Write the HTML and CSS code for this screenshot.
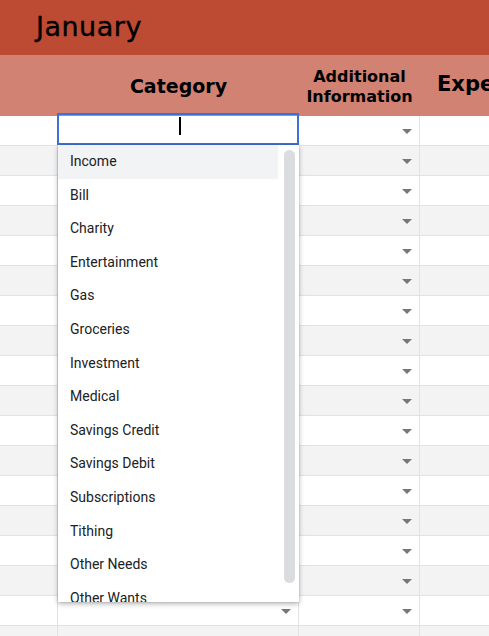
FILE: index.html
```html
<!DOCTYPE html>
<html>
<head>
<meta charset="utf-8">
<link rel="stylesheet" href="styles.css">
</head>
<body>
<div class="sheet">
  <div class="title"><span>January</span></div>
  <div class="header">
    <div class="hcell c1"></div>
    <div class="hcell c2"><span class="cat">Category</span></div>
    <div class="hcell c3"><span class="addl">Additional<br>Information</span></div>
    <div class="hcell c4"><span class="expe">Expe</span></div>
  </div>
  <div class="rows">
    <div class="row"><div class="cell c1"></div><div class="cell c2 selected"><span class="caret"></span></div><div class="cell c3"><i class="arrow"></i></div><div class="cell c4"></div></div>
    <div class="row alt"><div class="cell c1"></div><div class="cell c2"><i class="arrow"></i></div><div class="cell c3"><i class="arrow"></i></div><div class="cell c4"></div></div>
    <div class="row"><div class="cell c1"></div><div class="cell c2"><i class="arrow"></i></div><div class="cell c3"><i class="arrow"></i></div><div class="cell c4"></div></div>
    <div class="row alt"><div class="cell c1"></div><div class="cell c2"><i class="arrow"></i></div><div class="cell c3"><i class="arrow"></i></div><div class="cell c4"></div></div>
    <div class="row"><div class="cell c1"></div><div class="cell c2"><i class="arrow"></i></div><div class="cell c3"><i class="arrow"></i></div><div class="cell c4"></div></div>
    <div class="row alt"><div class="cell c1"></div><div class="cell c2"><i class="arrow"></i></div><div class="cell c3"><i class="arrow"></i></div><div class="cell c4"></div></div>
    <div class="row"><div class="cell c1"></div><div class="cell c2"><i class="arrow"></i></div><div class="cell c3"><i class="arrow"></i></div><div class="cell c4"></div></div>
    <div class="row alt"><div class="cell c1"></div><div class="cell c2"><i class="arrow"></i></div><div class="cell c3"><i class="arrow"></i></div><div class="cell c4"></div></div>
    <div class="row"><div class="cell c1"></div><div class="cell c2"><i class="arrow"></i></div><div class="cell c3"><i class="arrow"></i></div><div class="cell c4"></div></div>
    <div class="row alt"><div class="cell c1"></div><div class="cell c2"><i class="arrow"></i></div><div class="cell c3"><i class="arrow"></i></div><div class="cell c4"></div></div>
    <div class="row"><div class="cell c1"></div><div class="cell c2"><i class="arrow"></i></div><div class="cell c3"><i class="arrow"></i></div><div class="cell c4"></div></div>
    <div class="row alt"><div class="cell c1"></div><div class="cell c2"><i class="arrow"></i></div><div class="cell c3"><i class="arrow"></i></div><div class="cell c4"></div></div>
    <div class="row"><div class="cell c1"></div><div class="cell c2"><i class="arrow"></i></div><div class="cell c3"><i class="arrow"></i></div><div class="cell c4"></div></div>
    <div class="row alt"><div class="cell c1"></div><div class="cell c2"><i class="arrow"></i></div><div class="cell c3"><i class="arrow"></i></div><div class="cell c4"></div></div>
    <div class="row"><div class="cell c1"></div><div class="cell c2"><i class="arrow"></i></div><div class="cell c3"><i class="arrow"></i></div><div class="cell c4"></div></div>
    <div class="row alt"><div class="cell c1"></div><div class="cell c2"><i class="arrow"></i></div><div class="cell c3"><i class="arrow"></i></div><div class="cell c4"></div></div>
    <div class="row"><div class="cell c1"></div><div class="cell c2"><i class="arrow"></i></div><div class="cell c3"><i class="arrow"></i></div><div class="cell c4"></div></div>
    <div class="row alt"><div class="cell c1"></div><div class="cell c2"><i class="arrow"></i></div><div class="cell c3"><i class="arrow"></i></div><div class="cell c4"></div></div>
  </div>

  <div class="dropdown">
    <ul class="options">
      <li class="active">Income</li>
      <li>Bill</li>
      <li>Charity</li>
      <li>Entertainment</li>
      <li>Gas</li>
      <li>Groceries</li>
      <li>Investment</li>
      <li>Medical</li>
      <li>Savings Credit</li>
      <li>Savings Debit</li>
      <li>Subscriptions</li>
      <li>Tithing</li>
      <li>Other Needs</li>
      <li>Other Wants</li>
    </ul>
    <div class="scrollbar"></div>
  </div>
</div>
</body>
</html>
```

FILE: styles.css
```css
* { box-sizing: border-box; }
html, body { margin: 0; padding: 0; }
body {
  width: 489px;
  height: 636px;
  overflow: hidden;
  background: #ffffff;
}
.sheet {
  position: relative;
  width: 489px;
  height: 636px;
  overflow: hidden;
}
.title {
  height: 55px;
  background: #bd4b34;
  padding-left: 36px;
  display: flex;
  align-items: center;
}
.title span {
  font-family: "Comic Sans MS", "DejaVu Sans", sans-serif;
  font-size: 27px;
  color: #000;
  position: relative;
  top: -1px;
  letter-spacing: 0.5px;
  -webkit-text-stroke: 0.4px #000;
}
.header {
  height: 61px;
  background: #d18272;
  display: grid;
  grid-template-columns: 58px 241px 121px 69px;
  font-family: "Comic Sans MS", "DejaVu Sans", sans-serif;
  font-weight: bold;
  color: #000;
}
.hcell {
  display: flex;
  align-items: center;
  justify-content: center;
  overflow: hidden;
}
.cat {
  font-size: 19px;
}
.addl {
  font-size: 16px;
  line-height: 20px;
  text-align: center;
  white-space: nowrap;
  position: relative;
  top: 1px;
}
.hcell.c4 {
  justify-content: flex-start;
  padding-left: 17px;
}
.expe {
  font-size: 21px;
  position: relative;
  top: -2px;
}
.rows { display: flex; flex-direction: column; }
.row {
  display: grid;
  grid-template-columns: 58px 241px 121px 69px;
  height: 30px;
  background: #ffffff;
}
.row.alt { background: #f3f3f3; }
.cell {
  border-bottom: 1px solid #e2e2e2;
  border-right: 1px solid #e2e2e2;
  display: flex;
  align-items: center;
  justify-content: flex-end;
  padding-right: 7px;
  position: relative;
}
.cell.c4 { border-right: none; }
.arrow {
  display: block;
  width: 0;
  height: 0;
  border-left: 5px solid transparent;
  border-right: 5px solid transparent;
  border-top: 5px solid #777777;
  margin-top: 1px;
}
.selected::after {
  content: "";
  position: absolute;
  left: -1px;
  right: -1px;
  top: -3px;
  bottom: 0px;
  border: 2px solid #3c72d6;
}
.caret {
  position: absolute;
  left: 121px;
  top: 1px;
  width: 2px;
  height: 18px;
  background: #000;
}
.dropdown {
  position: absolute;
  left: 58px;
  top: 145px;
  width: 241px;
  height: 457px;
  background: #ffffff;
  box-shadow: 0 2px 5px rgba(0,0,0,0.28), 0 0 2px rgba(0,0,0,0.15);
  overflow: hidden;
}
.options {
  list-style: none;
  margin: 0;
  padding: 0;
  font-family: Roboto, "Noto Sans", sans-serif;
  font-size: 14px;
  color: #202124;
}
.options li {
  height: 33.6px;
  line-height: 33.6px;
  padding-left: 12px;
  width: 220px;
  white-space: nowrap;
}
.options li.active { background: #f1f3f4; }
.scrollbar {
  position: absolute;
  left: 226px;
  top: 5px;
  width: 11px;
  height: 433px;
  border-radius: 6px;
  background: #dadce0;
}
```
